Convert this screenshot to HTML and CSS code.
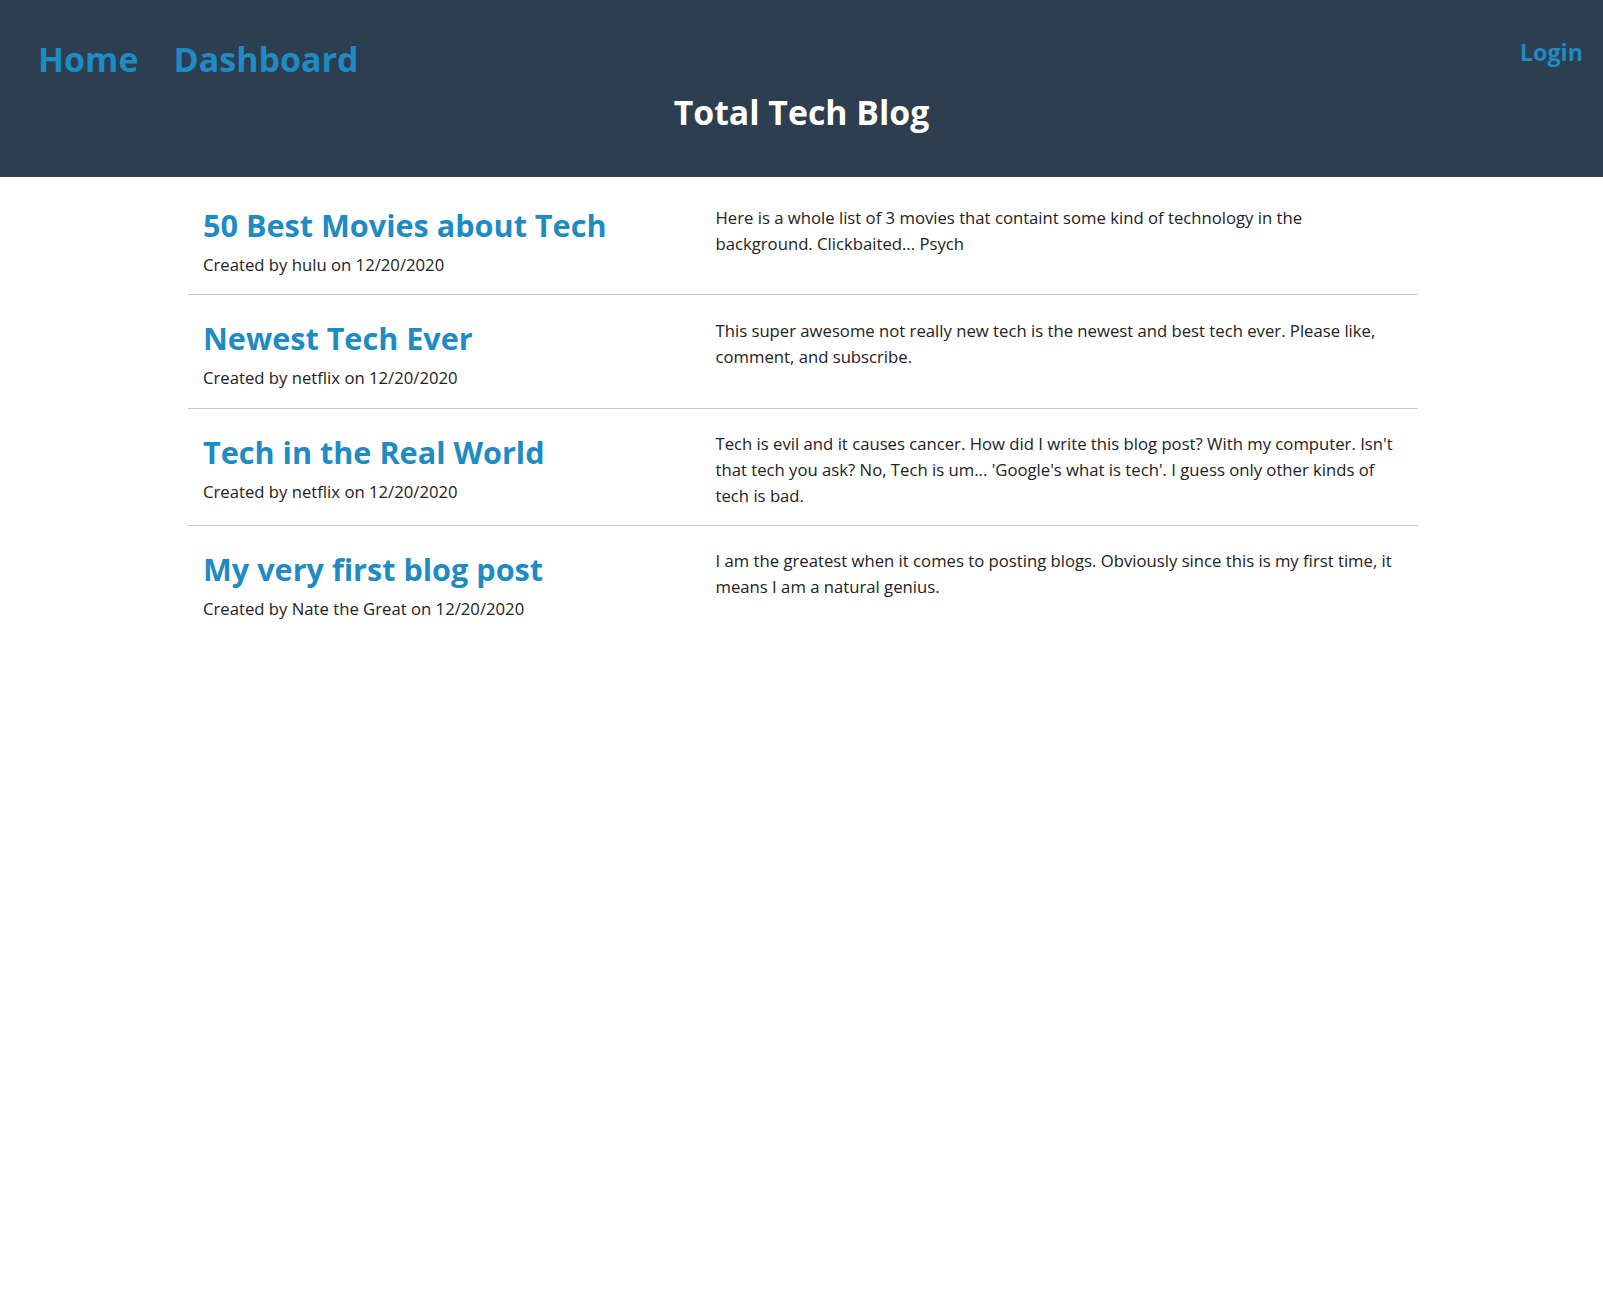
FILE: index.html
```html
<!DOCTYPE html>
<html lang="en">
<head>
<meta charset="utf-8">
<title>Total Tech Blog</title>
<link rel="stylesheet" href="styles.css">
</head>
<body>
<header class="site-header">
  <div class="topbar">
    <nav class="main-nav">
      <a class="nav-link" href="#">Home</a>
      <a class="nav-link" href="#">Dashboard</a>
    </nav>
    <a class="login-link" href="#">Login</a>
  </div>
  <h1 class="site-title">Total Tech Blog</h1>
</header>
<main class="posts">
  <article class="post">
    <div class="post-head">
      <a class="post-title" href="#">50 Best Movies about Tech</a>
      <p class="post-meta">Created by hulu on 12/20/2020</p>
    </div>
    <div class="post-body">
      <p class="post-text">Here is a whole list of 3 movies that containt some kind of technology in the background. Clickbaited... Psych</p>
    </div>
  </article>
  <article class="post">
    <div class="post-head">
      <a class="post-title" href="#">Newest Tech Ever</a>
      <p class="post-meta">Created by netflix on 12/20/2020</p>
    </div>
    <div class="post-body">
      <p class="post-text">This super awesome not really new tech is the newest and best tech ever. Please like, comment, and subscribe.</p>
    </div>
  </article>
  <article class="post">
    <div class="post-head">
      <a class="post-title" href="#">Tech in the Real World</a>
      <p class="post-meta">Created by netflix on 12/20/2020</p>
    </div>
    <div class="post-body">
      <p class="post-text">Tech is evil and it causes cancer. How did I write this blog post? With my computer. Isn't that tech you ask? No, Tech is um... 'Google's what is tech'. I guess only other kinds of tech is bad.</p>
    </div>
  </article>
  <article class="post">
    <div class="post-head">
      <a class="post-title" href="#">My very first blog post</a>
      <p class="post-meta">Created by Nate the Great on 12/20/2020</p>
    </div>
    <div class="post-body">
      <p class="post-text">I am the greatest when it comes to posting blogs. Obviously since this is my first time, it means I am a natural genius.</p>
    </div>
  </article>
</main>
</body>
</html>
```

FILE: styles.css
```css
* {
  box-sizing: border-box;
}

body {
  margin: 0;
  background: #ffffff;
  color: #222222;
  font-family: "Open Sans", "Noto Sans", sans-serif;
}

a {
  text-decoration: none;
}

.site-header {
  height: 177px;
  background: #2d3e50;
  padding: 36px 20px 0 38px;
}

.topbar {
  display: flex;
  justify-content: space-between;
  align-items: flex-start;
}

.main-nav {
  display: flex;
  gap: 35px;
  margin-top: 3px;
}

.nav-link {
  color: #1e8bc3;
  font-weight: 700;
  font-size: 34px;
  line-height: 40px;
}

.login-link {
  color: #1e8bc3;
  font-weight: 700;
  font-size: 23.3px;
  line-height: 28px;
  margin-top: 2px;
}

.site-title {
  margin: 13px 0 0 -18px;
  text-align: center;
  color: #ffffff;
  font-weight: 700;
  font-size: 33.8px;
  line-height: 41px;
}

.posts {
  width: 1230px;
  margin: 0 0 0 188px;
  padding-top: 5px;
}

.post {
  display: flex;
  padding: 21px 0 15.5px;
  border-bottom: 1px solid #cccccc;
}

.post:last-child {
  border-bottom: none;
}

.post-head {
  flex: 0 0 41.6667%;
  padding: 0 15px;
}

.post-body {
  flex: 1 1 auto;
  padding: 0 15px;
}

.post-title {
  display: block;
  color: #1e8bc3;
  font-weight: 700;
  font-size: 30.6px;
  line-height: 44px;
}

.post-meta {
  margin: 5px 0 1.5px;
  font-size: 16.7px;
  line-height: 25.3px;
}

.post-text {
  margin: 1.5px 0 0;
  font-size: 16.7px;
  line-height: 26px;
}
```
